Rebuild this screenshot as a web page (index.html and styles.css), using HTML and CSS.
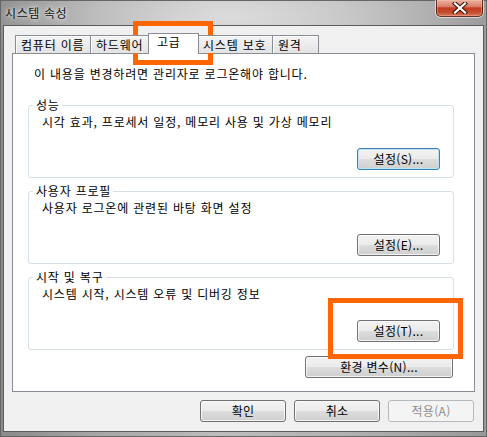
FILE: index.html
```html
<!DOCTYPE html>
<html lang="ko">
<head>
    <meta charset="UTF-8">
    <title>시스템 속성</title>
    <link rel="stylesheet" href="styles.css">
</head>
<body>
    <div class="window">
        <div class="titlebar">
            <span class="title">시스템 속성</span>
            <div class="close-btn">
                <svg width="16" height="12" viewBox="0 0 16 12">
                    <path d="M3 1.5 L13 10.5 M13 1.5 L3 10.5" stroke="#3b1408" stroke-width="4.2" stroke-linecap="square"/>
                    <path d="M3 1.5 L13 10.5 M13 1.5 L3 10.5" stroke="#ffffff" stroke-width="2.2" stroke-linecap="square"/>
                </svg>
            </div>
        </div>

        <div class="client">
            <div class="tabs">
                <div class="tab tab-wide">컴퓨터 이름</div>
                <div class="tab tab-mid">하드웨어</div>
                <div class="tab active">고급</div>
                <div class="tab tab-wide">시스템 보호</div>
                <div class="tab tab-small">원격</div>
            </div>

            <div class="panel">
                <p class="note">이 내용을 변경하려면 관리자로 로그온해야 합니다.</p>

                <fieldset class="group">
                    <legend>성능</legend>
                    <p class="group-text">시각 효과, 프로세서 일정, 메모리 사용 및 가상 메모리</p>
                    <div class="group-actions">
                        <button class="btn btn-default">설정(S)...</button>
                    </div>
                </fieldset>

                <fieldset class="group">
                    <legend>사용자 프로필</legend>
                    <p class="group-text">사용자 로그온에 관련된 바탕 화면 설정</p>
                    <div class="group-actions">
                        <button class="btn">설정(E)...</button>
                    </div>
                </fieldset>

                <fieldset class="group">
                    <legend>시작 및 복구</legend>
                    <p class="group-text">시스템 시작, 시스템 오류 및 디버깅 정보</p>
                    <div class="group-actions">
                        <button class="btn">설정(T)...</button>
                    </div>
                </fieldset>

                <div class="env-row">
                    <button class="btn btn-env">환경 변수(N)...</button>
                </div>
            </div>

            <div class="dialog-buttons">
                <button class="btn btn-dialog">확인</button>
                <button class="btn btn-dialog">취소</button>
                <button class="btn btn-dialog" disabled>적용(A)</button>
            </div>
        </div>

        <!-- orange highlight marks -->
        <div class="mark mark-tab"></div>
        <div class="mark mark-button"></div>
    </div>
</body>
</html>
```

FILE: styles.css
```css
/* Base styles */
* {
    margin: 0;
    padding: 0;
    box-sizing: border-box;
}

:root {
    --frame-line: #5c5c5c;
    --tab-border: #898c95;
    --group-border: #d5dfe5;
    --client-bg: #f0f0f0;
    --mark: #ff6600;
}

body {
    font-family: "Noto Sans CJK KR", "Noto Sans", sans-serif;
    font-size: 12px;
    line-height: 14px;
    letter-spacing: 0.8px;
    color: #000;
    background: #7a7a7a;
}

/* Window frame */
.window {
    position: relative;
    width: 487px;
    height: 437px;
    background:
        radial-gradient(ellipse 55% 14% at 48% 4%, rgba(230, 230, 230, 0.75), rgba(230, 230, 230, 0) 100%),
        linear-gradient(90deg, #8a8a8a 0%, #a6a6a6 20%, #bdbdbd 45%, #b2b2b2 70%, #989898 100%);
    box-shadow: inset 0 0 0 1px #666;
    overflow: hidden;
}

.titlebar {
    height: 25px;
    display: flex;
    justify-content: space-between;
    align-items: flex-start;
    padding-left: 5px;
}

.title {
    margin-top: 6px;
    color: #111;
    letter-spacing: 0.6px;
    text-shadow: 0 0 6px rgba(255, 255, 255, 0.9), 0 0 3px rgba(255, 255, 255, 0.8);
}

.close-btn {
    width: 47px;
    height: 17px;
    margin-right: 4px;
    border: 1px solid rgba(70, 20, 10, 0.8);
    border-top: none;
    border-radius: 0 0 5px 5px;
    background: linear-gradient(#eab3a3 0%, #d9806a 40%, #c23d20 50%, #c24a2c 75%, #d9765a 100%);
    box-shadow: 0 0 0 1px rgba(255, 255, 255, 0.55), inset 0 0 0 1px rgba(255, 200, 180, 0.35);
    display: flex;
    align-items: center;
    justify-content: center;
}

/* Client area */
.client {
    margin: 0 3px;
    height: 407px;
    border: 1px solid var(--frame-line);
    background: var(--client-bg);
    padding: 7px 8px 0 8px;
}

/* Tabs */
.tabs {
    display: flex;
    align-items: flex-end;
    height: 21px;
    margin-bottom: -1px;
    padding-left: 3px;
    position: relative;
    z-index: 1;
}

.tab {
    height: 18px;
    margin-bottom: 1px;
    padding: 2px 0 0 5px;
    border: 1px solid var(--tab-border);
    border-bottom: none;
    border-right: none;
    background: linear-gradient(#f4f4f4, #e3e3e3);
    box-shadow: inset 1px 1px 0 #fcfcfc;
    white-space: nowrap;
}

.tab-wide {
    width: 75px;
}

.tab-mid {
    width: 60px;
}

.tab-small {
    width: 47px;
    border-right: 1px solid var(--tab-border);
}

.tab.active {
    width: 51px;
    height: 21px;
    margin: 0 -2px 0 -2px;
    padding: 1px 0 0 8px;
    border-right: 1px solid var(--tab-border);
    background: #fff;
    box-shadow: none;
    position: relative;
    z-index: 2;
}

/* Tab panel */
.panel {
    background: #fff;
    border: 1px solid var(--tab-border);
    padding: 13px 20px 13px 15px;
}

.note {
    margin-left: 6px;
    margin-bottom: 17px;
}

.group {
    border: 1px solid var(--group-border);
    border-radius: 3px;
    padding: 3px 13px 7px 13px;
    margin-bottom: 6px;
}

.group legend {
    margin-left: -9px;
    padding: 0 2px 0 3px;
}

.group-actions {
    display: flex;
    justify-content: flex-end;
    margin-top: 19px;
}

.env-row {
    display: flex;
    justify-content: flex-end;
    margin-top: 6px;
    margin-right: 1px;
}

/* Buttons */
.btn {
    font-family: inherit;
    font-size: 12px;
    line-height: 14px;
    letter-spacing: 0.3px;
    color: #000;
    height: 22px;
    width: 83px;
    border: 1px solid #707070;
    border-radius: 3px;
    background: linear-gradient(#f2f2f2 0%, #ebebeb 50%, #dddddd 50%, #cfcfcf 100%);
    box-shadow: inset 0 0 0 1px rgba(255, 255, 255, 0.75);
    cursor: pointer;
}

.btn-default {
    border-color: #3c7fb1;
    box-shadow: inset 0 0 0 1px #b9e5f9;
}

.btn-env {
    width: 148px;
}

.btn-dialog {
    width: 86px;
}

.btn:disabled {
    color: #8d8d8d;
    border-color: #b5b9bc;
    background: #f4f4f4;
    box-shadow: none;
}

.dialog-buttons {
    display: flex;
    justify-content: flex-end;
    gap: 8px;
    margin-top: 8px;
    padding-right: 1px;
}

/* Highlight marks drawn over the dialog */
.mark {
    position: absolute;
    border: 5px solid var(--mark);
}

.mark-tab {
    left: 133px;
    top: 21px;
    width: 80px;
    height: 44px;
}

.mark-button {
    left: 328px;
    top: 298px;
    width: 135px;
    height: 61px;
}
```
